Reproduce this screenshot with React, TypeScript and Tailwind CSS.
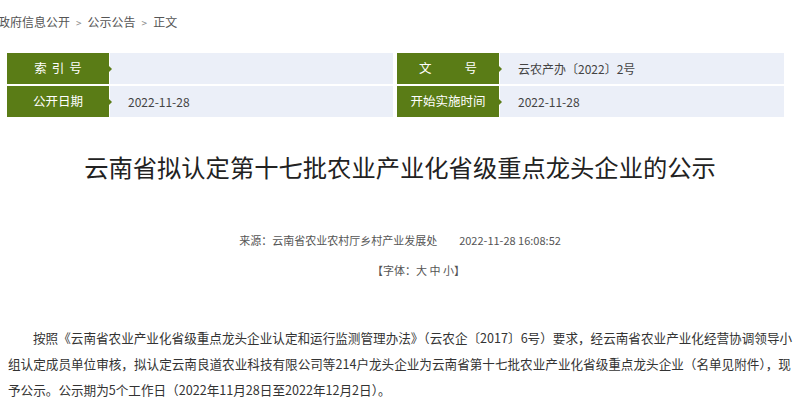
import React from "react";

const FONT = { fontFamily: '"Noto Sans CJK SC", "Noto Sans", sans-serif' };

const Label: React.FC<{ children: React.ReactNode }> = ({ children }) => (
  <div className="relative flex w-[102px] shrink-0 items-center justify-center bg-[#5a7c16] text-[12.5px] text-white">
    {children}
    <span className="absolute right-[-3px] top-1/2 h-0 w-0 -translate-y-1/2 border-y-[3px] border-l-[3px] border-y-transparent border-l-[#5a7c16]" />
  </div>
);

const Cell: React.FC<{ label: React.ReactNode; value?: string }> = ({ label, value }) => (
  <div className="flex h-[31px]">
    <Label>{label}</Label>
    <div className="ml-px flex flex-1 items-center bg-[#ebeff8] pl-[18px] text-[12px] text-[#444]">
      {value}
    </div>
  </div>
);

export default function App() {
  return (
    <div className="h-[405px] w-[800px] overflow-hidden bg-white" style={FONT}>
      {/* breadcrumb */}
      <div className="ml-[-2px] flex h-[44px] items-center text-[12px] text-[#555]">
        <span>政府信息公开</span>
        <span className="mx-[6px] text-[10px] text-[#888]">&gt;</span>
        <span>公示公告</span>
        <span className="mx-[6px] text-[10px] text-[#888]">&gt;</span>
        <span>正文</span>
      </div>

      {/* meta table */}
      <div className="ml-[7px] mt-[9px] grid w-[777px] grid-cols-[386px_387px] gap-x-[4px] gap-y-[2px]">
        <Cell label={<span className="pl-[5px] tracking-[5px]">索引号</span>} />
        <Cell
          label={
            <span className="flex w-[58px] justify-between">
              <span>文</span>
              <span>号</span>
            </span>
          }
          value="云农产办〔2022〕2号"
        />
        <Cell label="公开日期" value="2022-11-28" />
        <Cell label="开始实施时间" value="2022-11-28" />
      </div>

      {/* title */}
      <h1 className="mt-[34px] text-center text-[24.3px] leading-[32px] text-[#222]">
        云南省拟认定第十七批农业产业化省级重点龙头企业的公示
      </h1>

      <div className="mt-[49px] flex justify-center text-[11px] leading-[16px] text-[#555]">
        <span>来源：云南省农业农村厅乡村产业发展处</span>
        <span className="ml-[22px]">2022-11-28 16:08:52</span>
      </div>

      <div className="mt-[14px] pl-[372px] text-[11px] leading-[16px] text-[#555]">
        【字体：大 中 小】
      </div>

      <p className="ml-[8px] mt-[47px] w-[786px] indent-[25px] text-[12.6px] leading-[26px] text-[#333]">
        按照《云南省农业产业化省级重点龙头企业认定和运行监测管理办法》（云农企〔2017〕6号）要求，经云南省农业产业化经营协调领导小组认定成员单位审核，拟认定云南良道农业科技有限公司等214户龙头企业为云南省第十七批农业产业化省级重点龙头企业（名单见附件），现予公示。公示期为5个工作日（2022年11月28日至2022年12月2日）。
      </p>
    </div>
  );
}
